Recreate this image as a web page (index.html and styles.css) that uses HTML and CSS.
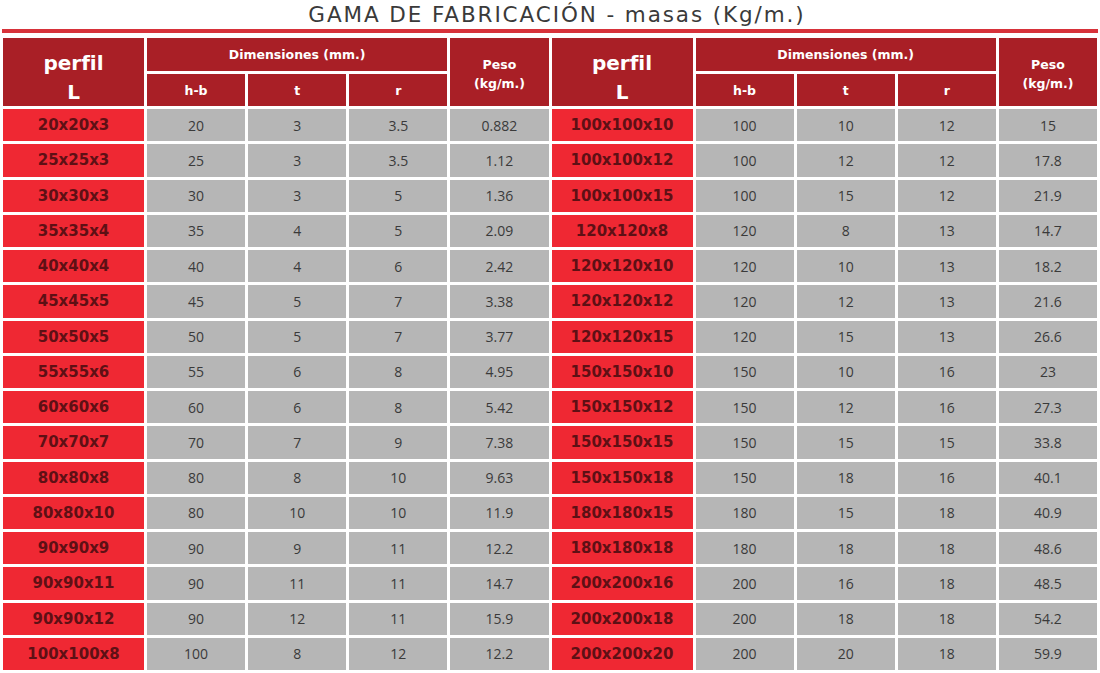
FILE: index.html
```html
<!DOCTYPE html>
<html lang="es">
<head>
<meta charset="utf-8">
<title>Gama de fabricación</title>
<link rel="stylesheet" href="styles.css">
</head>
<body>
<div class="page">
  <h1 class="title">GAMA DE FABRICACIÓN - masas (Kg/m.)</h1>
  <div class="rule"></div>
  <div class="table">
    <div class="hd perfil-h">perfil<br>L</div>
    <div class="hd dim-h">Dimensiones (mm.)</div>
    <div class="hd peso-h">Peso<br>(kg/m.)</div>
    <div class="hd perfil-h">perfil<br>L</div>
    <div class="hd dim-h">Dimensiones (mm.)</div>
    <div class="hd peso-h">Peso<br>(kg/m.)</div>
    <div class="hd sub">h-b</div><div class="hd sub">t</div><div class="hd sub">r</div>
    <div class="hd sub">h-b</div><div class="hd sub">t</div><div class="hd sub">r</div>

    <div class="pf">20x20x3</div><div class="v">20</div><div class="v">3</div><div class="v">3.5</div><div class="v">0.882</div>
    <div class="pf">100x100x10</div><div class="v">100</div><div class="v">10</div><div class="v">12</div><div class="v">15</div>

    <div class="pf">25x25x3</div><div class="v">25</div><div class="v">3</div><div class="v">3.5</div><div class="v">1.12</div>
    <div class="pf">100x100x12</div><div class="v">100</div><div class="v">12</div><div class="v">12</div><div class="v">17.8</div>

    <div class="pf">30x30x3</div><div class="v">30</div><div class="v">3</div><div class="v">5</div><div class="v">1.36</div>
    <div class="pf">100x100x15</div><div class="v">100</div><div class="v">15</div><div class="v">12</div><div class="v">21.9</div>

    <div class="pf">35x35x4</div><div class="v">35</div><div class="v">4</div><div class="v">5</div><div class="v">2.09</div>
    <div class="pf">120x120x8</div><div class="v">120</div><div class="v">8</div><div class="v">13</div><div class="v">14.7</div>

    <div class="pf">40x40x4</div><div class="v">40</div><div class="v">4</div><div class="v">6</div><div class="v">2.42</div>
    <div class="pf">120x120x10</div><div class="v">120</div><div class="v">10</div><div class="v">13</div><div class="v">18.2</div>

    <div class="pf">45x45x5</div><div class="v">45</div><div class="v">5</div><div class="v">7</div><div class="v">3.38</div>
    <div class="pf">120x120x12</div><div class="v">120</div><div class="v">12</div><div class="v">13</div><div class="v">21.6</div>

    <div class="pf">50x50x5</div><div class="v">50</div><div class="v">5</div><div class="v">7</div><div class="v">3.77</div>
    <div class="pf">120x120x15</div><div class="v">120</div><div class="v">15</div><div class="v">13</div><div class="v">26.6</div>

    <div class="pf">55x55x6</div><div class="v">55</div><div class="v">6</div><div class="v">8</div><div class="v">4.95</div>
    <div class="pf">150x150x10</div><div class="v">150</div><div class="v">10</div><div class="v">16</div><div class="v">23</div>

    <div class="pf">60x60x6</div><div class="v">60</div><div class="v">6</div><div class="v">8</div><div class="v">5.42</div>
    <div class="pf">150x150x12</div><div class="v">150</div><div class="v">12</div><div class="v">16</div><div class="v">27.3</div>

    <div class="pf">70x70x7</div><div class="v">70</div><div class="v">7</div><div class="v">9</div><div class="v">7.38</div>
    <div class="pf">150x150x15</div><div class="v">150</div><div class="v">15</div><div class="v">15</div><div class="v">33.8</div>

    <div class="pf">80x80x8</div><div class="v">80</div><div class="v">8</div><div class="v">10</div><div class="v">9.63</div>
    <div class="pf">150x150x18</div><div class="v">150</div><div class="v">18</div><div class="v">16</div><div class="v">40.1</div>

    <div class="pf">80x80x10</div><div class="v">80</div><div class="v">10</div><div class="v">10</div><div class="v">11.9</div>
    <div class="pf">180x180x15</div><div class="v">180</div><div class="v">15</div><div class="v">18</div><div class="v">40.9</div>

    <div class="pf">90x90x9</div><div class="v">90</div><div class="v">9</div><div class="v">11</div><div class="v">12.2</div>
    <div class="pf">180x180x18</div><div class="v">180</div><div class="v">18</div><div class="v">18</div><div class="v">48.6</div>

    <div class="pf">90x90x11</div><div class="v">90</div><div class="v">11</div><div class="v">11</div><div class="v">14.7</div>
    <div class="pf">200x200x16</div><div class="v">200</div><div class="v">16</div><div class="v">18</div><div class="v">48.5</div>

    <div class="pf">90x90x12</div><div class="v">90</div><div class="v">12</div><div class="v">11</div><div class="v">15.9</div>
    <div class="pf">200x200x18</div><div class="v">200</div><div class="v">18</div><div class="v">18</div><div class="v">54.2</div>

    <div class="pf">100x100x8</div><div class="v">100</div><div class="v">8</div><div class="v">12</div><div class="v">12.2</div>
    <div class="pf">200x200x20</div><div class="v">200</div><div class="v">20</div><div class="v">18</div><div class="v">59.9</div>
  </div>
</div>
</body>
</html>
```

FILE: styles.css
```css
* { box-sizing: border-box; }
html, body { margin: 0; padding: 0; background: #ffffff; }
body { font-family: "Open Sans", "Liberation Sans", sans-serif; width: 1100px; height: 673px; overflow: hidden; }

.page { padding: 0 3px 0 3px; }

.title {
  margin: 0;
  height: 29px;
  padding-top: 3px;
  text-align: center;
  font-family: "DejaVu Sans", "Open Sans", sans-serif;
  font-size: 21.5px;
  line-height: 24px;
  font-weight: 400;
  color: #3a3a3a;
  letter-spacing: 1.9px;
  padding-left: 14px;
}

.rule {
  height: 4px;
  margin: 0 0 5px -1px;
  width: 1096px;
  background: #d7323a;
}

.table {
  display: grid;
  grid-template-columns: 141px repeat(4, 1fr) 141px repeat(4, 1fr);
  grid-template-rows: 33px 32px repeat(16, 1fr);
  gap: 3px;
  width: 1094px;
  height: 632px;
}

.table > div {
  display: flex;
  align-items: center;
  justify-content: center;
  text-align: center;
}

.hd {
  background: #a91f26;
  color: #ffffff;
  font-family: "DejaVu Sans", "Open Sans", sans-serif;
  font-weight: 700;
}

.perfil-h {
  grid-row: span 2;
  font-size: 20px;
  line-height: 29px;
  padding-top: 11px;
}

.dim-h {
  grid-column: span 3;
  font-size: 12.5px;
}

.peso-h {
  grid-row: span 2;
  font-size: 12.5px;
  line-height: 19px;
  padding-top: 3px;
}

.sub { font-size: 12.5px; }

.pf {
  background: #ef2833;
  color: #5e1015;
  font-family: "DejaVu Sans", "Open Sans", sans-serif;
  font-weight: 700;
  font-size: 15px;
}

.v {
  background: #b6b6b6;
  color: #3a3a3a;
  font-size: 14px;
}
```
